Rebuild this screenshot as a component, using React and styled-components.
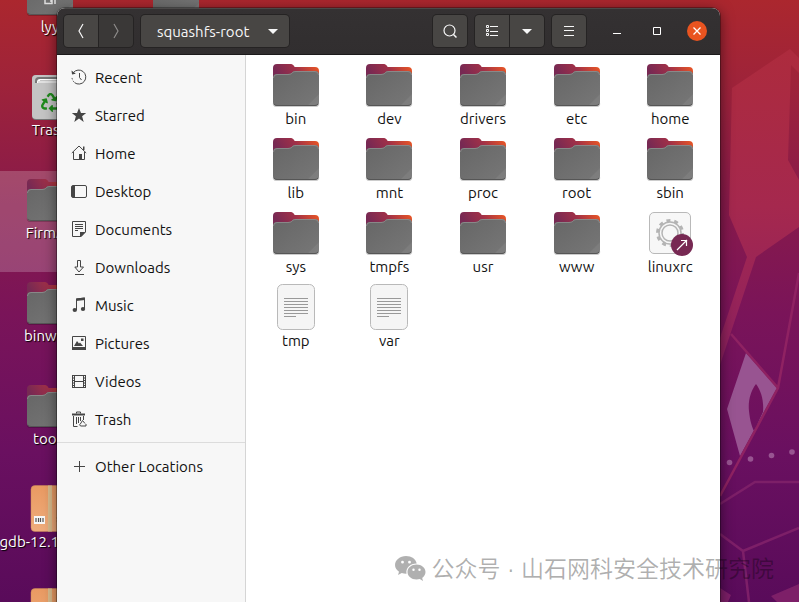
import { FaRecycle } from "react-icons/fa";
import styled, { createGlobalStyle } from "styled-components";

const GlobalStyle = createGlobalStyle`
  * {
    box-sizing: border-box;
  }
  body {
    margin: 0;
    font-family: Ubuntu, "Noto Sans", "Noto Sans CJK SC", sans-serif;
    font-size: 15px;
  }
  button {
    font: inherit;
    border: none;
    padding: 0;
    cursor: pointer;
  }
  svg {
    display: block;
    flex-shrink: 0;
  }
`;

const Desktop = styled.div`
  position: relative;
  height: 100vh;
  overflow: hidden;
  background: linear-gradient(
    #ab272e 0%,
    #9e233a 14%,
    #881a4b 34%,
    #7a1459 52%,
    #6a1060 75%,
    #590b5a 100%
  );
`;

const Wallpaper = styled.svg`
  position: absolute;
  top: 0;
  right: 0;
`;

const IconColumns = styled.div`
  display: flex;
  gap: 26px;
  margin-top: -35px;
`;

const IconColumn = styled.div`
  display: flex;
  flex-direction: column;
  gap: 2px;
`;

const DesktopIcon = styled.button`
  display: flex;
  flex-direction: column;
  align-items: center;
  width: 100px;
  height: 101px;
  padding-top: 5px;
  color: #fff;
  line-height: 18px;
  text-shadow: 1px 1px 1px #000;
  white-space: nowrap;
  background: ${(props) =>
    props.$selected ? "rgba(255, 255, 255, 0.2)" : "transparent"};
`;

const Window = styled.main`
  position: absolute;
  top: 8px;
  right: 79px;
  bottom: 0;
  left: 57px;
  display: flex;
  flex-direction: column;
  border-radius: 8px 8px 0 0;
  background: #fff;
  overflow: hidden;
`;

const WindowShadow = styled.div`
  position: absolute;
  top: 8px;
  right: 79px;
  bottom: -20px;
  left: 57px;
  border-radius: 8px 8px 0 0;
  box-shadow: 0 0 0 1px rgba(0, 0, 0, 0.3), 0 3px 14px rgba(0, 0, 0, 0.55);
`;

const HeaderBar = styled.header`
  display: flex;
  align-items: center;
  gap: 8px;
  height: 47px;
  padding: 0 13px 1px 7px;
  color: #fff;
  background: linear-gradient(#343132, #312e2f);
  border-top: 1px solid #4a4848;
  border-bottom: 1px solid #1c1a1b;
`;

const Linked = styled.div`
  display: flex;
  gap: 1px;
  border-radius: 4px;
  background: #252323;
  box-shadow: 0 0 0 1px #252323;
  overflow: hidden;
`;

const HeaderButton = styled.button`
  display: flex;
  align-items: center;
  justify-content: center;
  width: 34px;
  height: 32px;
  color: ${(props) => (props.$dim ? "#8d8b8a" : "#f7f7f7")};
  background: ${(props) => (props.$dim ? "#3a3837" : "#484644")};
`;

const PathButton = styled(HeaderButton)`
  justify-content: space-between;
  width: 148px;
  padding: 0 11px 0 16px;
`;

const Spacer = styled.div`
  flex: 1;
`;

const WindowControls = styled.div`
  display: flex;
  gap: 20px;
  margin-left: 13px;
`;

const ControlButton = styled.button`
  display: flex;
  align-items: center;
  justify-content: center;
  width: 20px;
  height: 20px;
  border-radius: 50%;
  color: #fff;
  background: ${(props) => (props.$close ? "#e95420" : "transparent")};
`;

const Body = styled.div`
  display: flex;
  flex: 1;
  min-height: 0;
`;

const Sidebar = styled.nav`
  width: 189px;
  padding-top: 3px;
  background: #f7f7f7;
  border-right: 1px solid #d5d5d5;
`;

const Place = styled.a`
  display: flex;
  align-items: center;
  gap: 8px;
  height: 38px;
  padding-left: 14px;
  color: #111;
  text-decoration: none;

  svg {
    color: #454545;
  }
`;

const Separator = styled.hr`
  height: 1px;
  margin: 4px 0;
  border: none;
  background: #dcdcdc;
`;

const Files = styled.section`
  flex: 1;
  display: grid;
  grid-template-columns: repeat(5, 1fr);
  align-content: start;
  gap: 6px 0;
  padding: 6px 3px 0;
`;

const File = styled.button`
  display: flex;
  flex-direction: column;
  align-items: center;
  color: #111;
  line-height: 20px;
  background: transparent;
`;

const Watermark = styled.div`
  position: absolute;
  right: 25px;
  bottom: 16px;
  display: flex;
  align-items: center;
  gap: 6px;
  color: rgba(0, 0, 0, 0.31);
  font-family: "Liberation Sans", "Noto Sans CJK SC", sans-serif;
  font-size: 23px;
  line-height: 34px;
  white-space: nowrap;
`;

const Icon = ({ size = 16, children }) => (
  <svg
    width={size}
    height={size}
    viewBox={`0 0 ${size} ${size}`}
    fill="none"
    stroke="currentColor"
    aria-hidden="true"
  >
    {children}
  </svg>
);

const Wall = () => (
  <Wallpaper width="99" height="602" viewBox="700 0 99 602" aria-hidden="true">
    <defs>
      <linearGradient id="ribbon" x1="0" y1="0" x2="0" y2="1">
        <stop offset="0" stopColor="#ad2b3d" />
        <stop offset="0.5" stopColor="#a5284e" />
        <stop offset="1" stopColor="#8c2060" />
      </linearGradient>
      <linearGradient id="folderBack" x1="0" y1="0.2" x2="1" y2="0">
        <stop offset="0" stopColor="#772953" />
        <stop offset="0.45" stopColor="#a03048" />
        <stop offset="1" stopColor="#f05a22" />
      </linearGradient>
      <linearGradient id="folderFront" x1="0" y1="0" x2="1" y2="1">
        <stop offset="0" stopColor="#666" />
        <stop offset="1" stopColor="#777" />
      </linearGradient>
      <linearGradient id="box" x1="0" y1="0" x2="0" y2="1">
        <stop offset="0" stopColor="#e99a62" />
        <stop offset="1" stopColor="#efac7c" />
      </linearGradient>
    </defs>
    <path
      d="M790 49 732 88 729 215 747 257 720 338V365L756 257 799 227V180L788 160 791 65 799 73V58Z"
      fill="url(#ribbon)"
    />
    <path
      d="M746 353 777 388 740 456 727 409ZM756 384C750 392 748 402 749 411 750 421 752 427 754 431L763 412C764 400 761 391 756 384Z"
      fill="#985491"
      fillRule="evenodd"
    />
    <g fill="none" stroke="#8f2262" strokeWidth="2.5">
      <path d="M731 334 778 388 720 496M778 388 799 273" />
      <path d="M720 504 755 482H799M720 534 743 551 799 528M743 551 749 602" stroke="#7d1f68" />
    </g>
    <path d="M720 588 731 595 728 602H720ZM771 596 799 584V602H777Z" fill="#7d1f68" />
    <g fill="#985491">
      <circle cx="729.5" cy="462.5" r="2.8" />
      <circle cx="750.5" cy="459" r="2.8" />
      <circle cx="771.5" cy="455.5" r="2.8" />
      <circle cx="792" cy="452" r="2.8" />
    </g>
  </Wallpaper>
);

const Folder = ({ film }) => (
  <svg width="48" height="48" viewBox="0 0 48 48" aria-hidden="true">
    <path d="M1 14V42a3 3 0 0 0 3 4H44a3 3 0 0 0 3-4V14Z" fill="#000" opacity="0.2" />
    <path
      d="M1 18V7a4 4 0 0 1 4-4H18c2 0 3 .6 4 2l.7 1H43a4 4 0 0 1 4 4v8Z"
      fill="url(#folderBack)"
    />
    <path
      d="M1 17a4 4 0 0 1 4-4H16c2 0 3-.4 4-1.4C21 10.400 22 10 24 10H43a4 4 0 0 1 4 4V41a4 4 0 0 1-4 4H5a4 4 0 0 1-4-4Z"
      fill="url(#folderFront)"
    />
    <path
      d="M1.500 17a3.500 3.500 0 0 1 3.500-3.500H16c2 0 3-.4 4-1.400C21 11 22 10.500 24 10.500H43a3.500 3.500 0 0 1 3.500 3.500"
      fill="none"
      stroke="#909090"
      strokeWidth="0.8"
    />
    <path d="M47 33V41a4 4 0 0 1-4 4H35Z" fill="#fff" opacity="0.06" />
    <path d="M2 43a4 4 0 0 0 3 1.500H43a4 4 0 0 0 3-1.500" fill="none" stroke="#565656" />
    {film && (
      <path d="M19 22V33.500H26V22M25 28v4M29 22V34" fill="none" stroke="#ddd" strokeWidth="1.500" />
    )}
  </svg>
);

const TextFile = () => (
  <svg width="48" height="48" viewBox="0 0 48 48" aria-hidden="true">
    <rect x="5.5" y="1.500" width="37" height="45" rx="5" fill="#f5f5f5" stroke="#b9b9b9" />
    <path
      d="M12 15.500H36M12 18.500H36M12 21.500H36M12 24.500H36M12 27.500H36M12 30.500H36M12 33.500H24"
      stroke="#999"
    />
  </svg>
);

const LinkFile = () => (
  <svg width="48" height="48" viewBox="0 0 48 48" aria-hidden="true">
    <rect x="3.500" y="3.500" width="41" height="41" rx="4.500" fill="#f7f7f7" stroke="#b9b9b9" />
    <g fill="none" stroke="#b4b4b4">
      <circle cx="24" cy="24" r="12.5" strokeWidth="3" strokeDasharray="4 3.850" />
      <circle cx="24" cy="24" r="11" strokeWidth="1.500" />
      <circle cx="24" cy="24" r="8" strokeWidth="1.500" />
    </g>
    <circle cx="36" cy="36" r="11" fill="#772953" />
    <path d="M31 41 41 31M35 31.500H40.500V37" fill="none" stroke="#fff" strokeWidth="1.200" />
  </svg>
);

const TrashCan = () => (
  <svg width="48" height="48" viewBox="0 0 48 48" aria-hidden="true">
    <rect x="6" y="2" width="36" height="45" rx="4" fill="#777" />
    <rect x="6" y="2" width="36" height="44" rx="4" fill="#c4c4c4" />
    <path d="M9 8a4 4 0 0 1 4-4H38v6H9Z" fill="#777" />
    <path d="M11 9a3 3 0 0 1 3-3H38v4H11Z" fill="#fff" />
    <path d="M12 9H38M14 7.500H38" stroke="#aaa" strokeWidth="0.700" />
    <FaRecycle x="15" y="20" size={19} color="#1f8a1c" />
  </svg>
);

const Package = () => (
  <svg width="48" height="48" viewBox="0 0 48 48" aria-hidden="true">
    <rect x="5" y="0.500" width="38" height="46" rx="4" fill="url(#box)" stroke="#c98a58" strokeWidth="0.500" />
    <path d="M22 0.500h4v46h-4Z" fill="#d8bb8c" />
    <path d="M30 33h8M30 36h8" stroke="#c98a58" />
    <rect x="8" y="31" width="11" height="8" fill="#f7f7f7" />
    <path d="M10 33v4M12.500 33v4M14.500 33v4M17 33v4" stroke="#555" strokeWidth="1.200" />
  </svg>
);

const placeIcons = {
  Recent: (
    <>
      <path d="M2.300 3.700A7 7 0 1 1 3.500 13.600" />
      <path d="M3 13a7 7 0 0 1-2-4.500" strokeDasharray="1.500 1.500" />
      <path d="M0.500 1.500 1 5.500 4.800 4.800Z" fill="currentColor" stroke="none" />
      <path d="M8.500 4V8.500L10.500 11" />
    </>
  ),
  Starred: (
    <path
      d="m8 1 2 5h5.200l-4.100 3.200L12.700 15 8 11.500 3.300 15l1.600-5.800L.8 6H6Z"
      fill="currentColor"
      stroke="none"
    />
  ),
  Home: (
    <>
      <path d="M.8 8 8 1l7.200 7M2.500 7V14.500H13.500V7" />
      <path d="M8 9h3v6H8ZM12 1.500h1.500V5H12Z" fill="currentColor" stroke="none" />
    </>
  ),
  Desktop: (
    <>
      <rect x="0.500" y="2.500" width="15" height="12" rx="1.500" />
      <path d="M1 3h3v11H1Z" fill="currentColor" stroke="none" />
    </>
  ),
  Documents: (
    <>
      <path d="M1.500.500H14.500V11L10 15.500H1.500Z" />
      <path d="M4 3.500h8M4 5.500h8M4 7.500h8M4 9.500h3" />
      <path d="M9 11h5.500L10 16H9Z" fill="currentColor" stroke="none" />
    </>
  ),
  Downloads: <path d="M6.500 1.500h3V8h3L8 13 3.800 8H6.500ZM4 15.500h9" />,
  Music: (
    <>
      <path d="M5.500 13V2L13.500 1V11.500" />
      <path d="M5 1.500 14 .5V3L5 4Z" fill="currentColor" stroke="none" />
      <ellipse cx="3.800" cy="13" rx="2.200" ry="2" fill="currentColor" stroke="none" />
      <ellipse cx="12" cy="12" rx="2.200" ry="2" fill="currentColor" stroke="none" />
    </>
  ),
  Pictures: (
    <>
      <path d="M1.500 1.500h13v13h-13Z" />
      <path
        d="M1 12h14v3H1ZM3 11 6 6l2 2.500L9 7.500l3 3.500ZM10 3.500h2.500V6H10Z"
        fill="currentColor"
        stroke="none"
      />
    </>
  ),
  Videos: (
    <>
      <path d="M3.500 2.500h9v12h-9ZM4 8.500h8" />
      <path
        d="M1.500 2V15M14.500 2V15M2 2.500h2M2 5h2M2 7.500h2M2 10h2M2 12.500h2M2 14.500h2M12 2.500h2M12 5h2M12 7.500h2M12 10h2M12 12.500h2M12 14.500h2"
      />
    </>
  ),
  Trash: (
    <>
      <path d="M5.500 2.500V1h4v1.500M2.500 5V15.500H6.500M12.500 5v4M5.500 6v7M7.500 6v6M9.500 6v4" />
      <path d="M1 3.500H14" strokeWidth="2" />
      <path d="M9 13.500 11.500 9.500 14 12.500M15 13v2H9.500l-1-1.500" />
    </>
  ),
  "Other Locations": <path d="M8.500 3V14M3 8.500H14" />,
};

const places = Object.keys(placeIcons);

const files = [
  { name: "bin" },
  { name: "dev" },
  { name: "drivers" },
  { name: "etc" },
  { name: "home" },
  { name: "lib" },
  { name: "mnt" },
  { name: "proc" },
  { name: "root" },
  { name: "sbin" },
  { name: "sys" },
  { name: "tmpfs" },
  { name: "usr" },
  { name: "www" },
  { name: "linuxrc", icon: <LinkFile /> },
  { name: "tmp", icon: <TextFile /> },
  { name: "var", icon: <TextFile /> },
];

const shortcuts = [
  { name: "lyy", icon: <Folder film /> },
  { name: "Trash", icon: <TrashCan /> },
  { name: "FirmAE", icon: <Folder />, selected: true },
  { name: "binwalk", icon: <Folder /> },
  { name: "tools", icon: <Folder /> },
  { name: "gdb-12.1.tar.gz", icon: <Package /> },
];

const Triangle = () => (
  <svg width="10" height="5" viewBox="0 0 10 5" aria-hidden="true">
    <path d="M0 0H10L5 5Z" fill="currentColor" />
  </svg>
);

const PlaceLink = ({ name }) => (
  <Place href="#">
    <Icon>{placeIcons[name]}</Icon>
    {name}
  </Place>
);

const Header = () => (
  <HeaderBar>
    <Linked>
      <HeaderButton aria-label="Back">
        <Icon>
          <path d="M10 1 6 8l4 7" strokeWidth="1.200" />
        </Icon>
      </HeaderButton>
      <HeaderButton $dim aria-label="Forward">
        <Icon>
          <path d="m6 1 4 7-4 7" strokeWidth="1.200" />
        </Icon>
      </HeaderButton>
    </Linked>
    <Linked>
      <PathButton>
        squashfs-root
        <Triangle />
      </PathButton>
    </Linked>
    <Spacer />
    <Linked>
      <HeaderButton aria-label="Search">
        <Icon>
          <circle cx="7.500" cy="7.500" r="5.500" strokeWidth="1.200" />
          <path d="m11.500 11.500 3 3" strokeWidth="1.500" />
        </Icon>
      </HeaderButton>
    </Linked>
    <Linked>
      <HeaderButton aria-label="List view">
        <Icon>
          <path d="M6 3.500h8M6 8.500h8M6 12.500h8M2.500 2.500h2v2h-2ZM2.500 6.500h2v2h-2ZM2.500 10.500h2v2h-2Z" />
        </Icon>
      </HeaderButton>
      <HeaderButton aria-label="View options">
        <Triangle />
      </HeaderButton>
    </Linked>
    <Linked>
      <HeaderButton aria-label="Menu">
        <Icon>
          <path d="M3 3.500h10M3 7.500h10M3 12.500h10" />
        </Icon>
      </HeaderButton>
    </Linked>
    <WindowControls>
      <ControlButton aria-label="Minimize">
        <Icon>
          <path d="M4 10.500h8" />
        </Icon>
      </ControlButton>
      <ControlButton aria-label="Maximize">
        <Icon>
          <path d="M4.500 4.500h7v7h-7Z" />
        </Icon>
      </ControlButton>
      <ControlButton $close aria-label="Close">
        <Icon>
          <path d="m4.500 4.500 7 7M11.500 4.500l-7 7" strokeWidth="1.300" />
        </Icon>
      </ControlButton>
    </WindowControls>
  </HeaderBar>
);

const App = () => {
  return (
    <Desktop>
      <GlobalStyle />
      <Wall />
      <IconColumns>
        <IconColumn>
          {shortcuts.map((item) => (
            <DesktopIcon key={item.name} $selected={item.selected}>
              {item.icon}
              {item.name}
            </DesktopIcon>
          ))}
          <DesktopIcon aria-label="Archive">
            <Package />
          </DesktopIcon>
        </IconColumn>
        <IconColumn>
          <DesktopIcon aria-label="Folder">
            <Folder />
          </DesktopIcon>
        </IconColumn>
      </IconColumns>
      <WindowShadow />
      <Window>
        <Header />
        <Body>
          <Sidebar>
            {places.slice(0, -1).map((name) => (
              <PlaceLink key={name} name={name} />
            ))}
            <Separator />
            <PlaceLink name="Other Locations" />
          </Sidebar>
          <Files>
            {files.map((file) => (
              <File key={file.name}>
                {file.icon || <Folder />}
                {file.name}
              </File>
            ))}
          </Files>
        </Body>
      </Window>
      <Watermark>
        <svg width="31" height="26" viewBox="0 0 31 26" aria-hidden="true">
          <path
            d="M11 0C5 0 0 4 0 9c0 3 1.500 5 4 6.700L3 19l3.800-2c1.500.5 3 .8 4.700.7C10.500 12 15 7.500 21.700 7.500 21 3 16.500 0 11 0ZM7.500 4.800a1.400 1.400 0 1 1 0 2.800 1.400 1.400 0 0 1 0-2.800ZM14.500 4.800a1.400 1.400 0 1 1 0 2.800 1.400 1.400 0 0 1 0-2.800Z"
            fill="currentColor"
            fillRule="evenodd"
          />
          <path
            d="M21.500 8.500c-5 0-9 3.300-9 7.500s4 7.500 9 7.500c1.200 0 2.300-.2 3.300-.5L28 25l-.8-3c2-1.500 3.300-3.600 3.300-6 0-4.200-4-7.500-9-7.500ZM18.500 12.500a1.200 1.200 0 1 1 0 2.400 1.200 1.200 0 0 1 0-2.400ZM24.500 12.500a1.200 1.200 0 1 1 0 2.400 1.200 1.200 0 0 1 0-2.400Z"
            fill="currentColor"
            fillRule="evenodd"
          />
        </svg>
        公众号 · 山石网科安全技术研究院
      </Watermark>
    </Desktop>
  );
};

export default App;
